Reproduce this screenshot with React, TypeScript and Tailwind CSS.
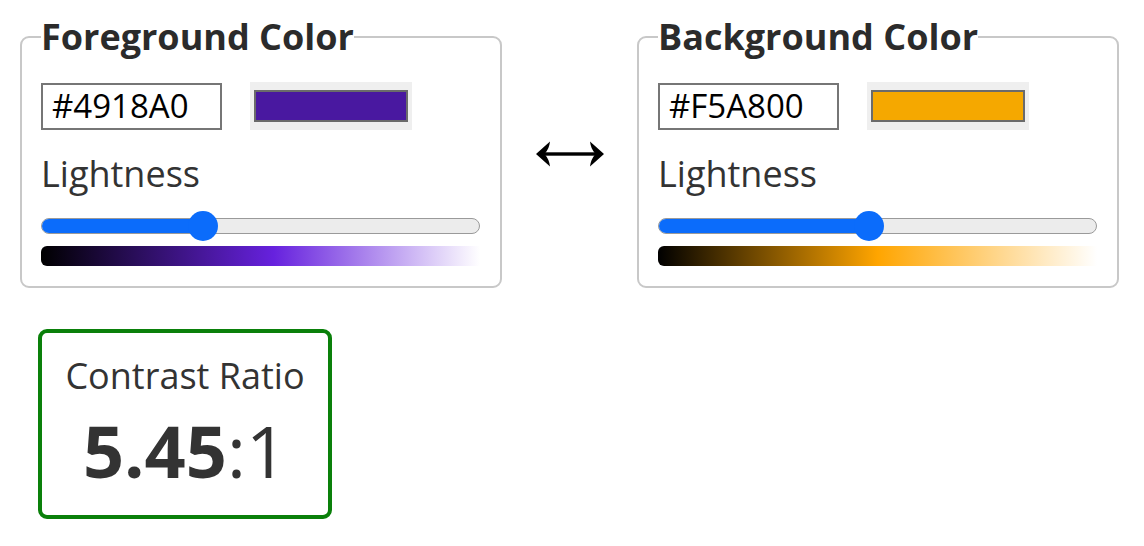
import React from 'react'

const font = { fontFamily: '"Open Sans", "Noto Sans", sans-serif' }

type PickerProps = {
  title: string
  hex: string
  pct: number
  gradient: string
}

function ColorPicker({ title, hex, pct, gradient }: PickerProps) {
  return (
    <fieldset className="w-[482px] rounded-[9px] border-2 border-[#c8c8c8] pl-[19px] pr-[20px] pb-[20px]">
      <legend className="p-0 text-[36px] font-bold leading-[40px] text-[#2b2b2b]">{title}</legend>
      <div className="mt-[25px] flex items-center gap-[28px]">
        <div className="flex h-[47px] w-[181px] items-center border-2 border-[#767676] bg-white pl-[9px] text-[33px] text-black">
          {hex}
        </div>
        <div className="flex h-[48px] w-[162px] items-center justify-center bg-[#efefef]">
          <div className="h-[32px] w-[154px] border-2 border-[#6b6b6b]" style={{ backgroundColor: hex }} />
        </div>
      </div>
      <div className="mt-[22px] text-[36px] leading-[44px] text-[#333]">Lightness</div>
      <div className="relative mt-[15px] flex h-[30px] items-center">
        <div className="relative h-[16px] w-full overflow-hidden rounded-full border border-[#9a9a9a] bg-[#ececec]">
          <div className="h-full bg-[#0b6cfb]" style={{ width: `${pct}%` }} />
        </div>
        <div
          className="absolute top-0 h-[30px] w-[30px] -translate-x-1/2 rounded-full bg-[#0b6cfb]"
          style={{ left: `${pct}%` }}
        />
      </div>
      <div className="mt-[5px] h-[20px] w-full rounded-l-md" style={{ background: gradient }} />
    </fieldset>
  )
}

function Arrow() {
  return (
    <svg width="68" height="28" viewBox="0 0 68 28" className="text-black">
      <rect x="6" y="12.3" width="56" height="3.4" fill="currentColor" />
      <path d="M0 14 L14 1.5 C13.5 6 12 10 8.5 14 C12 18 13.5 22 14 26.5 Z" fill="currentColor" />
      <path d="M68 14 L54 1.5 C54.5 6 56 10 59.5 14 C56 18 54.5 22 54 26.5 Z" fill="currentColor" />
    </svg>
  )
}

export default function App() {
  return (
    <div className="min-h-screen bg-white pl-[20px] pt-[17px]" style={font}>
      <div className="flex items-center">
        <ColorPicker
          title="Foreground Color"
          hex="#4918A0"
          pct={37}
          gradient="linear-gradient(to right, #000, hsl(262 74% 50%) 53%, rgba(255,255,255,0.6))"
        />
        <div className="flex w-[135px] justify-center pt-[2px]">
          <Arrow />
        </div>
        <ColorPicker
          title="Background Color"
          hex="#F5A800"
          pct={48}
          gradient="linear-gradient(to right, #000, #ffa500 50%, rgba(255,255,255,0.6))"
        />
      </div>
      <div className="ml-[18px] mt-[41px] flex w-[294px] flex-col items-center rounded-[9px] border-4 border-[#0a800a] pt-[19px] pb-[29px] text-[#333]">
        <div className="text-[36px] leading-[48px]">Contrast Ratio</div>
        <div className="mt-[14px] text-[72px] leading-[72px]">
          <span className="font-bold">5.45</span>:1
        </div>
      </div>
    </div>
  )
}
